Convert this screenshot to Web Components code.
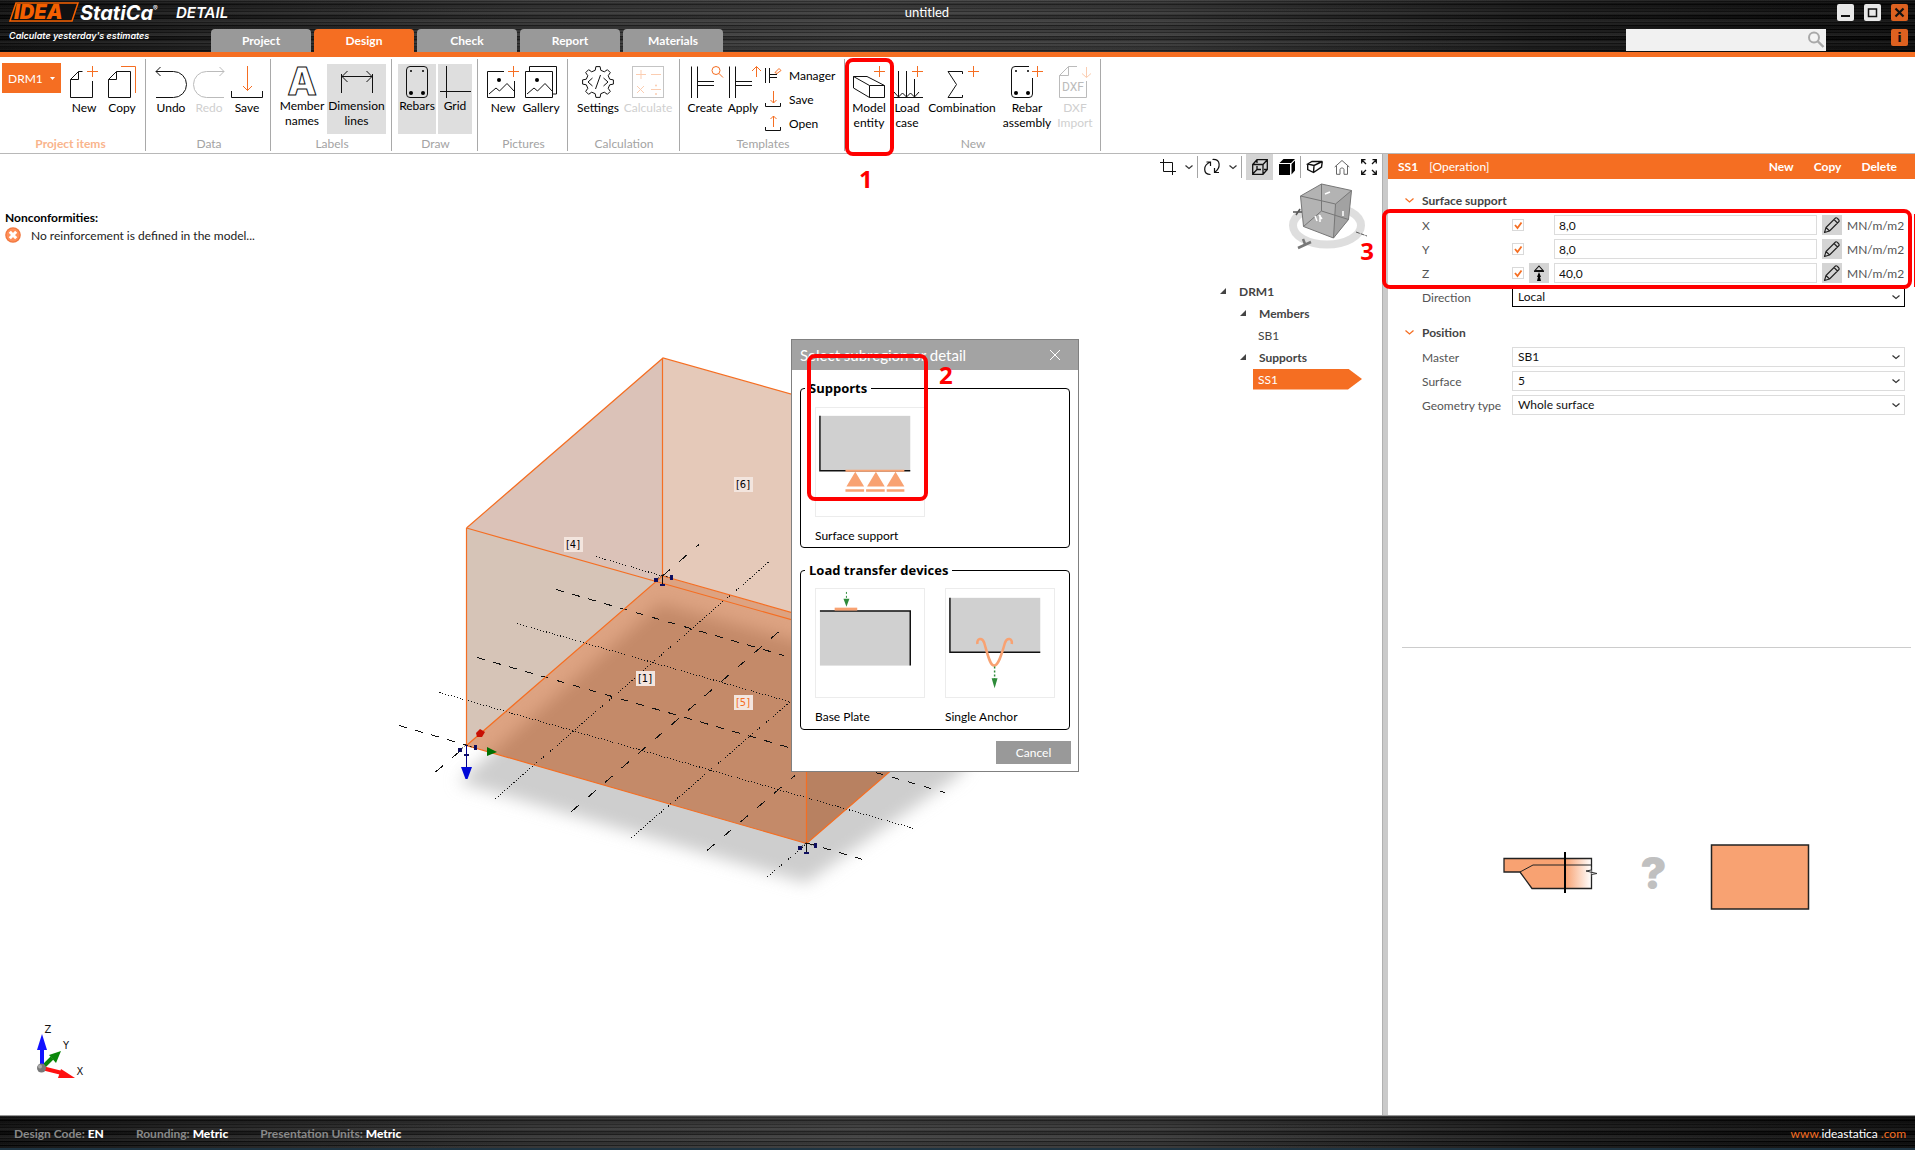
<!DOCTYPE html>
<html lang="en">
<head>
<meta charset="utf-8">
<title>untitled - IDEA StatiCa Detail</title>
<style>
html, body { height: 100%; }
body { margin: 0; background: #fff; font: 12px/15px Lato, "Open Sans", sans-serif; color: #000; --accent: #f56e22; }
</style>
</head>
<body>
<detail-app></detail-app>
<script>
const shared = `
*, *::before, *::after { box-sizing: border-box; }
button, input, select { font: inherit; color: inherit; margin: 0; border: 0; padding: 0; border-radius: 0; background: none; }
button, select { cursor: pointer; }
svg { display: block; }
`;
class Part extends HTMLElement {
  constructor() { super(); this.attachShadow({ mode: 'open' }); }
  connectedCallback() {
    if (this.shadowRoot.childNodes.length) return;
    this.shadowRoot.innerHTML = `<style>${shared}${this.css()}</style>${this.html()}`;
  }
  css() { return ':host{display:block}'; }
  html() { return '<slot></slot>'; }
}
const define = (name, cls) => customElements.define(name, cls);

/* ---------- icons ---------- */
const K = 'stroke="#111" fill="none"';
const O = 'stroke="#f56e22" fill="none"';
const plus = (x, y) => `<path ${O} d="M${x - 5.5} ${y}h11M${x} ${y - 5.5}v11"/>`;
function gear(cx, cy, ro, ri, n) {
  let d = '';
  for (let i = 0; i < n; i++) {
    [[-.30, ri], [-.17, ro], [.17, ro], [.30, ri]].forEach(([t, r]) => {
      const a = (i + t) * 2 * Math.PI / n - Math.PI / 2;
      d += (d ? 'L' : 'M') + (cx + r * Math.cos(a)).toFixed(1) + ' ' + (cy + r * Math.sin(a)).toFixed(1);
    });
  }
  return d + 'Z';
}
const beam = `<path ${K} d="M2.5 .5V32M8.5 .5V32M9 15.5H25M9 19.5H25"/>`;
const icons = {
  newdoc: [32, `<path ${K} d="M14.5 5.5H10.5L2.5 13.5V31.5H24.5V15M10.5 5.5V13.5H2.5"/>${plus(24.5, 5.5)}`],
  copy: [32, `<path ${K} d="M10.5 5.5H24.5V31.5H2.5V13.5ZV13.5H2.5"/><path ${O} d="M15 .5H29.5V27"/>`],
  undo: [32, `<path ${K} d="M1 5.5H18.5a13 13 0 0 1 0 26H1M5.5 1L1 5.5L5.5 10"/>`],
  redo: [32, `<path stroke="#bbb" fill="none" d="M31 5.5H13.5a13 13 0 0 0 0 26H31M26.5 1L31 5.5L26.5 10"/>`],
  save: [32, `<path ${K} d="M.5 25V31.5H31.5V25"/><path ${O} d="M16.5 0V24.5M12 20L16.5 24.5L21 20"/>`],
  letter: [32, `<text x="16" y="29" text-anchor="middle" font-family="Inter" font-weight="800" font-size="38" fill="none" stroke="#111">A</text>`],
  dim: [32, `<path ${K} d="M.5 8V27M31.5 8V27M1 10.5H31M6.5 5L1 10.5L6.5 16M25.5 5L31 10.5L25.5 16"/>`],
  rebars: [32, `<rect x="5.5" y=".5" width="21" height="31" rx="3.5" ${K}/><circle cx="10" cy="5" r="1"/><circle cx="22" cy="5" r="1"/><circle cx="10" cy="27" r="2"/><circle cx="22" cy="27" r="2"/>`],
  grid: [32, `<path ${K} d="M7.5 0V32M1 25.5H32"/>`],
  picnew: [32, `<path ${K} d="M17 5.5H.5V31.5H27.5V15M2 28L9 22L12.5 25L20 17.5L27.5 25.5"/><circle cx="12" cy="14" r="2"/>${plus(26.5, 5.5)}`],
  gallery: [32, `<path ${K} d="M.5 5.5H27.5V31.5H.5ZM4.5 5V.5H31.5V28H28M2 28L9 22L12.5 25L20 17.5L27.5 25.5"/><circle cx="12" cy="14" r="2"/>`],
  gear: [32, `<path ${K} stroke-linejoin="round" d="${gear(16, 16, 15.5, 12, 8)}"/><path ${K} d="M18.5 9L13.5 23M10.5 12L6 16L10.5 20M21.5 12L26 16L21.5 20"/>`],
  calc: [32, `<rect x=".5" y=".5" width="31" height="31" stroke="#c4c4c4" fill="none"/><path stroke="#fbcdb1" fill="none" d="M4 8.5H14M9 4V13M19 8.5H29M5 20L12 27M12 20L5 27M19 23.5H29"/><circle cx="24" cy="19.5" r="1" fill="#fbcdb1"/><circle cx="24" cy="28" r="1" fill="#fbcdb1"/>`],
  create: [32, `${beam}<circle cx="27" cy="4.5" r="4" ${O}/><path ${O} d="M30 7.5L34 11.5"/>`],
  apply: [32, `${beam}<path ${O} d="M29.5 11V.5M25 5L29.5 .5L34 5"/>`],
  load: [32, `<path ${K} d="M3 31.5H32M7.5 5V31M15.5 5V31M23.5 13V31M3 26L7.5 31L11.5 27L15.5 31L19.5 27L23.5 31L28 26"/>${plus(26.5, 5.5)}`],
  beam: [32, `<path ${K} d="M.5 10.5L14 10.5L31.5 19.5V31.5H16.5L.5 22ZL16.5 19.5H31.5M16.5 19.5V31.5"/>${plus(26.5, 5.5)}`],
  sigma: [32, `<path ${K} d="M16.5 8V5.5H2L10.5 18.5L2 31.5H16.5V29"/>${plus(27.5, 5.5)}`],
  rebarnew: [32, `<path ${K} d="M18 .5H4a3.5 3.5 0 0 0 -3.5 3.5V28a3.5 3.5 0 0 0 3.5 3.5H18a3.5 3.5 0 0 0 3.5 -3.5V12"/><circle cx="5" cy="5" r="1"/><circle cx="17" cy="5" r="1"/><circle cx="5" cy="27" r="2"/><circle cx="17" cy="27" r="2"/>${plus(26.5, 5.5)}`],
  dxf: [32, `<path stroke="#bbb" fill="none" d="M18 .5H9.5L.5 9.5V31.5H27.5V15M9.5 .5V9.5H.5"/><text x="14" y="25" text-anchor="middle" font-family="Roboto" font-size="12" fill="#bbb">DXF</text><path stroke="#fbcdb1" fill="none" d="M27.5 1V11.5M23 7.5L27.5 11.5L32 7.5"/>`],
  s_manager: [16, `<path ${K} d="M.5 1V16M4.5 1V16M5 7.5H12M5 10.5H12"/><path ${O} d="M10 5.5L14 1.5L16 3.5L12 6.5L10 5.5"/>`],
  s_save: [16, `<path ${K} d="M.5 12V15.5H15.5V12"/><path ${O} d="M8.5 0V12M5.5 9L8.5 12L11.5 9"/>`],
  s_open: [16, `<path ${K} d="M.5 12V15.5H15.5V12"/><path ${O} d="M8.5 12V1M5.5 4L8.5 1L11.5 4"/>`],
  crop: [16, `<path ${K} d="M3.5 0V12.5H16M0 3.5H12.5V16"/>`],
  chev: [8, `<path stroke="#333" fill="none" stroke-width="1.2" d="M.5 2.5L4 5.5L7.5 2.5"/>`],
  rotate: [16, `<path ${K} stroke-width="1.2" d="M6.5 15.5C-1 15.5 -1.5 6 6.5 3M2.5 3H6.5V7M6.500 10.500"/><path ${K} stroke-width="1.2" d="M8.5 .5C17 0 17 9 10.5 13.5M10.5 9V13.5H15"/>`],
  wire: [16, `<path ${K} stroke-width="1.3" d="M.7 5.5L5 .7H15.3V10.5L11 15.3H.7ZH11V15.3M11 5.5L15.3 .7M5 .7V4M5 7V10.5H9M12 10.5H15M.7 15L5 10.5"/>`],
  solid: [16, `<path d="M4.5 0H16L12 4H.5ZM0 5H11V16H0ZM12.5 5L16 1.5V11.5L12.5 15.5Z"/>`],
  persp: [16, `<path ${K} stroke-width="1.4" d="M.7 5L5 2.5H15.3L7 6.5ZV10.5L6.5 13.5L14.5 8L15.3 2.5M7 6.5L6.5 13.5"/>`],
  home: [16, `<path stroke="#666" fill="none" d="M.7 8L8 1.5L15.3 8M2.5 7V15.3H6V10.5C6 8.5 10 8.5 10 10.5V15.3H13.5V7"/>`],
  expand: [16, `<path ${K} stroke-width="1.3" d="M.7 4.5V.7H4.5M1 1L5 5M11.5 .7H15.3V4.5M15 1L11 5M.7 11.5V15.3H4.5M1 15L5 11M11.5 15.3H15.3V11.5M15 15L11 11"/>`],
  pencil: [20, `<path stroke="#222" fill="none" stroke-width="1.1" stroke-linejoin="round" d="M2.5 17.5L4 12.5L13.5 3C14.5 2 18 5.5 17 6.5L7.5 16ZM4 12.5L7.5 16M12 4.5L15.5 8"/>`],
  fixity: [20, `<path stroke="#111" fill="none" stroke-width="1.1" d="M10 3L14 7.5H6ZM5 8.5H15"/><path d="M10 9L12 14H11L12 18H8L9 14H8Z"/>`],
  search: [18, `<circle cx="7" cy="6.5" r="5" fill="#f4f4f4" stroke="#a9a9a9" stroke-width="2"/><path stroke="#a9a9a9" stroke-width="2.4" d="M10.5 10L16.5 16"/>`],
  close: [10, `<path stroke="#fff" fill="none" d="M0 0L10 10M10 0L0 10"/>`],
  error: [16, `<circle cx="8" cy="8" r="7.8" fill="#f07840"/><circle cx="8" cy="8" r="6.5" fill="#ff8f58"/><path stroke="#fff" stroke-width="3" d="M4.8 4.8L11.2 11.2M11.2 4.8L4.8 11.2"/>`],
};
class UiIcon extends Part {
  css() { return ':host{display:block;flex:none} svg{overflow:visible}'; }
  html() {
    const [s, body] = icons[this.getAttribute('name')];
    return `<svg width="${s}" height="${s}" viewBox="0 0 ${s} ${s}" aria-hidden="true">${body}</svg>`;
  }
}
define('ui-icon', UiIcon);

const brushed = `background:
  repeating-linear-gradient(180deg, rgba(255,255,255,.07) 0 1px, rgba(0,0,0,.22) 1px 2px, rgba(255,255,255,.03) 2px 4px, rgba(0,0,0,.25) 4px 5px, rgba(255,255,255,.05) 5px 7px),
  repeating-linear-gradient(180deg, rgba(255,255,255,.05) 0 3px, rgba(0,0,0,.12) 3px 8px, rgba(255,255,255,.04) 8px 11px),
  linear-gradient(90deg, #060606 0, #141414 10%, #2a2a2a 28%, #343434 45%, #2e2e2e 60%, #111 80%, #020202 100%);`;

/* ---------- title bar ---------- */
class TabButton extends Part {
  css() { return `:host{display:block}
    button{width:100px;height:23px;border-radius:4px 4px 0 0;background:#999;color:#fff;font-weight:700;display:block}
    :host([active]) button{background:var(--accent)}`; }
  html() { return '<button type="button"><slot></slot></button>'; }
}
define('tab-button', TabButton);

class TitleBar extends Part {
  css() { return `:host{display:flex;height:57px;border-bottom:5px solid var(--accent);color:#fff;${brushed}}
    .brand{width:211px;padding:2px 0 0 9px;flex:none}
    .brand svg{overflow:visible}
    .tag{font:italic 600 9px/12px Inter,sans-serif;margin-top:7px;white-space:nowrap}
    nav{display:flex;gap:3px;align-items:flex-end}
    .doc{position:absolute;left:0;right:0;top:4px;text-align:center;font-size:13px;line-height:17px;pointer-events:none;padding-right:61px}
    .tools{margin-left:auto;width:289px;padding:4px 7px 0 0;display:flex;flex-direction:column;gap:8px}
    .win{display:flex;justify-content:flex-end;gap:10px}
    .win button,.info{width:17px;height:17px;border-radius:2px;background:#e8e8e8;display:grid;place-items:center}
    .win button.x,.info{background:#dd6120}
    .row{display:flex;justify-content:space-between;align-items:flex-start}
    .find{display:flex;width:200px;height:22px;background:#f1f1f1;align-items:center}
    .find input{flex:1;min-width:0;height:22px;color:#222;padding:0 4px;outline:0}
    .find button{width:19px;height:19px}
    .info{font:700 13px/17px "DejaVu Sans",sans-serif;color:#111}`; }
  html() { return `
    <div class="brand">
      <svg width="200" height="21" viewBox="0 0 200 21">
        <path d="M7 1H69L63 19H1Z" fill="#111" stroke="#f56000" stroke-width="1.5"/>
        <text x="5" y="17" font-family="Inter" font-style="italic" font-weight="900" font-size="20" fill="#f56000">IDEA</text>
        <text x="71" y="18" font-family="Inter" font-style="italic" font-weight="700" font-size="20" fill="#fff">StatiCa</text>
        <text x="144" y="9" font-family="Inter" font-size="7" fill="#fff">®</text>
        <text x="167" y="16" font-family="Inter" font-style="italic" font-weight="600" font-size="15" fill="#fff">DETAIL</text>
      </svg>
      <div class="tag">Calculate yesterday's estimates</div>
    </div>
    <nav><tab-button>Project</tab-button><tab-button active>Design</tab-button><tab-button>Check</tab-button><tab-button>Report</tab-button><tab-button>Materials</tab-button></nav>
    <div class="doc">untitled</div>
    <div class="tools">
      <div class="win">
        <button type="button" aria-label="Minimize"><svg width="17" height="17"><path d="M4 12H13" stroke="#111" stroke-width="2"/></svg></button>
        <button type="button" aria-label="Maximize"><svg width="17" height="17"><path d="M4.5 5H12.5V12.5H4.5Z" fill="none" stroke="#111" stroke-width="1.5"/></svg></button>
        <button type="button" class="x" aria-label="Close"><svg width="17" height="17"><path d="M4.5 4.5L12.5 12.5M12.5 4.5L4.5 12.5" stroke="#111" stroke-width="2.2"/></svg></button>
      </div>
      <div class="row">
        <label class="find"><input type="search" aria-label="Search"><button type="button" aria-label="Find"><ui-icon name="search"></ui-icon></button></label>
        <button type="button" class="info" aria-label="Info">i</button>
      </div>
    </div>`; }
}
define('title-bar', TitleBar);

/* ---------- ribbon ---------- */
class RibbonButton extends Part {
  css() { return `:host{display:block;flex:none;width:38px}
    :host([wide]){width:50px} :host([wider]){width:72px}
    button{width:100%;display:flex;flex-direction:column;align-items:center;gap:2px;padding-top:2px;white-space:nowrap}
    button>span{margin:0 -12px;text-align:center}
    :host([toggle]) button{height:70px;gap:0}
    :host([on]) button{background:#dedede}
    :host([disabled]) span{color:#cfcfcf}`; }
  html() { return `<button type="button"${this.hasAttribute('disabled') ? ' disabled' : ''}><ui-icon name="${this.getAttribute('icon')}"></ui-icon><span><slot></slot></span></button>`; }
}
define('ribbon-button', RibbonButton);

class RibbonLine extends Part {
  css() { return `:host{display:block} button{display:flex;gap:8px;align-items:center;height:16px}`; }
  html() { return `<button type="button"><ui-icon name="${this.getAttribute('icon')}"></ui-icon><slot></slot></button>`; }
}
define('ribbon-line', RibbonLine);

class RibbonGroup extends Part {
  css() { return `:host{display:flex;flex-direction:column;justify-content:space-between;border-right:1px solid #a9a9a9;height:92px;padding-top:5px}
    .items{display:flex}
    .label{text-align:center;color:#a3a3a3;padding-right:4px}
    :host([accent]) .label{color:#f9b48c;font-weight:700}`; }
  html() { return `<div class="items"><slot></slot></div><div class="label">${this.getAttribute('label')}</div>`; }
}
define('ribbon-group', RibbonGroup);

class RibbonBar extends Part {
  css() { return `:host{display:flex;height:97px;padding-top:2px;border-bottom:1px solid #b8b8b8;background:#fff}
    .item{background:var(--accent);color:#fff;width:59px;height:30px;display:flex;align-items:center;justify-content:space-between;padding:0 6px;margin:-1px 4px 0 2px}
    .lines{display:flex;flex-direction:column;gap:8px;padding:3px 0 0 3px}
    ribbon-group{flex:none}`; }
  html() { return `
    <ribbon-group accent label="Project items" style="width:146px">
      <button type="button" class="item">DRM1 <svg width="5" height="3"><path d="M0 0H5L2.5 3Z" fill="#fff"/></svg></button>
      <ribbon-button icon="newdoc">New</ribbon-button><ribbon-button icon="copy">Copy</ribbon-button></ribbon-group>
    <ribbon-group label="Data" style="width:125px;padding-left:6px">
      <ribbon-button icon="undo">Undo</ribbon-button><ribbon-button icon="redo" disabled>Redo</ribbon-button><ribbon-button icon="save">Save</ribbon-button></ribbon-group>
    <ribbon-group label="Labels" style="width:121px;padding-left:6px">
      <ribbon-button toggle wide icon="letter">Member<br>names</ribbon-button><ribbon-button toggle on icon="dim" style="width:59px">Dimension<br>lines</ribbon-button></ribbon-group>
    <ribbon-group label="Draw" style="width:86px;padding-left:6px">
      <ribbon-button toggle on icon="rebars" style="margin-right:2px">Rebars</ribbon-button><ribbon-button toggle on icon="grid" style="width:34px">Grid</ribbon-button></ribbon-group>
    <ribbon-group label="Pictures" style="width:90px;padding-left:6px">
      <ribbon-button icon="picnew">New</ribbon-button><ribbon-button icon="gallery">Gallery</ribbon-button></ribbon-group>
    <ribbon-group label="Calculation" style="width:112px;padding-left:5px">
      <ribbon-button wide icon="gear">Settings</ribbon-button><ribbon-button wide icon="calc" disabled>Calculate</ribbon-button></ribbon-group>
    <ribbon-group label="Templates" style="width:165px;padding-left:6px">
      <ribbon-button icon="create">Create</ribbon-button><ribbon-button icon="apply">Apply</ribbon-button>
      <div class="lines"><ribbon-line icon="s_manager">Manager</ribbon-line><ribbon-line icon="s_save">Save</ribbon-line><ribbon-line icon="s_open">Open</ribbon-line></div></ribbon-group>
    <ribbon-group label="New" style="width:256px;padding-left:5px">
      <ribbon-button icon="beam">Model<br>entity</ribbon-button><ribbon-button icon="load">Load<br>case</ribbon-button>
      <ribbon-button wider icon="sigma">Combination</ribbon-button><ribbon-button wide icon="rebarnew" style="margin-left:4px">Rebar<br>assembly</ribbon-button><ribbon-button icon="dxf" disabled style="margin-left:4px">DXF<br>Import</ribbon-button></ribbon-group>`; }
}
define('ribbon-bar', RibbonBar);

/* ---------- 3D scene ---------- */
class ModelScene extends Part {
  css() { return `:host{display:block} svg{width:100%;height:100%} text{font:11px "DejaVu Sans Condensed",sans-serif}`; }
  tag(x, y, t, c = '#000') {
    return `<rect x="${x}" y="${y}" width="19" height="15" fill="#f3e5de"/><text x="${x + 9}" y="${y + 11}" text-anchor="middle" fill="${c}">[${t}]</text>`;
  }
  support(x, y) {
    return `<g stroke="#101060" fill="#080860"><path d="M${x + .5} ${y}V${y + 9}" stroke="#111"/><path d="M${x} ${y}L${x + 9} ${y + 3}M${x} ${y}L${x - 6} ${y + 5}" stroke="#111" stroke-dasharray="2 2"/><rect x="${x - 7.5}" y="${y + 3.5}" width="3" height="3"/><rect x="${x + 8.5}" y="${y + .5}" width="2" height="4"/><rect x="${x - 1.5}" y="${y + 9.5}" width="4" height="1"/></g>`;
  }
  html() { return `
  <svg viewBox="0 154 1382 961" preserveAspectRatio="xMinYMin meet" role="img" aria-label="Model">
    <defs><filter id="soft" x="-10%" y="-10%" width="120%" height="120%"><feGaussianBlur stdDeviation="8"/></filter></defs>
    <path d="M660 603L1010 700L958 776L806 883L458 782Z" fill="#cecece" filter="url(#soft)"/>
    <path d="M663 358L1004 454V673L663 576Z" fill="#e5c9b9"/>
    <path d="M466.5 528L663 358V576L466.5 745.5Z" fill="#dbc2b8"/>
    <path d="M466.5 528L657 581L466.5 745.5Z" fill="#d6c4b7"/>
    <path d="M466.5 745.5L663 576L1004 673L806.5 843.5Z" fill="rgb(186,67,0)" fill-opacity=".49"/>
    <path d="M806.5 624L1004 454V673L806.5 843.5Z" fill="#8a6040" fill-opacity=".2"/>
    <g stroke="#111" fill="none" shape-rendering="crispEdges">
      <path stroke-dasharray="8 8.6" d="M399 725.5L466 745M807 843L868 861M477 657.5L945 792.5M556 589.5L784 655.5"/>
      <path stroke-dasharray="10 12" d="M435.5 772L466.5 745.5M662.5 576L699 544.5M571.5 811.5L787 624.5M707 850.5L795 775.5"/>
      <path stroke-dasharray="1 2" d="M439.5 692.5L914 828.5M517 623.5L790 702M596 556.5L662 576M495.5 798.5L770 561M631.5 837.5L790 702M767.5 877L807 843"/>
    </g>
    <g stroke="#f56e22" fill="none" stroke-width="1.2">
      <path d="M466.5 528L663 358L1004 454M466.5 528V745.5L806.5 843.5V624L466.5 528M662.5 358V576L466.5 745.5M663 576L1004 673L806.5 843.5"/>
    </g>
    ${this.support(466, 745)}${this.support(662, 575)}${this.support(806, 843)}
    <path d="M466.5 745V768" stroke="#008"/><path d="M461 767H472L467.5 779H465.5Z" fill="#0008d8"/>
    <path d="M487 747L497 752L487 756Z" fill="#007000"/><path d="M476 733L480 729L485 732L482 737H477Z" fill="#c81004"/>
    ${this.tag(564, 537, 4)}${this.tag(734, 477, 6)}${this.tag(636, 671, 1)}${this.tag(734, 695, 5, '#f56e22')}
    <path d="M42 1068L52 1058" stroke="#0a870a" stroke-width="4"/><path d="M61 1051L56 1063L49 1055Z" fill="#0a870a"/>
    <path d="M42 1068L62 1073" stroke="#f11" stroke-width="4"/><path d="M75 1078L58 1078L61 1069Z" fill="#f11"/>
    <path d="M42 1068V1048" stroke="#11f" stroke-width="4"/><path d="M42 1034L47 1050H37Z" fill="#11f"/>
    <circle cx="41.5" cy="1068" r="4.5" fill="#777"/><circle cx="40" cy="1066.5" r="2" fill="#aaa"/>
    <g text-anchor="middle" fill="#111"><text x="48" y="1033">Z</text><text x="66" y="1049">Y</text><text x="80" y="1075">X</text></g>
  </svg>`; }
}
define('model-scene', ModelScene);

class ViewTools extends Part {
  css() { return `:host{display:flex;height:26px;align-items:center}
    button{display:grid;place-items:center;height:26px;width:27px}
    .c{width:16px} .on{background:#d4d4d4;margin-left:4px}
    i{width:1px;height:22px;background:#a5a5a5}`; }
  html() {
    const b = (n, c = '') => `<button type="button" class="${c}" aria-label="${n}"><ui-icon name="${n}"></ui-icon></button>`;
    return b('crop') + b('chev', 'c') + '<i></i>' + b('rotate') + b('chev', 'c') + '<i></i>' + b('wire', 'on') + b('solid') + '<i></i>' + b('persp') + b('home') + b('expand'); }
}
define('view-tools', ViewTools);

class NavCube extends Part {
  html() { return `<svg width="90" height="76" viewBox="1284 180 90 76" role="img" aria-label="View cube">
    <ellipse cx="1327" cy="225.5" rx="34" ry="19" fill="none" stroke="#dedede" stroke-width="8"/>
    <path d="M1300.5 196L1321.5 184L1351.5 190.5L1348.5 219.5L1333.5 238L1303.5 226.5Z" fill="#b3b3b3"/>
    <path d="M1335.5 204L1351.5 190.5L1348.5 219.5L1333.5 238Z" fill="#a2a2a2"/>
    <path d="M1300.5 196L1321.5 184L1351.5 190.5L1335.5 204ZL1303.5 226.5L1333.5 238L1348.5 219.5L1351.5 190.5M1335.5 204L1333.5 238M1321.5 184V211L1303.5 226.5M1321.5 211L1348.5 219.5" fill="none" stroke="#777"/>
    <path d="M1315 216L1317 221M1320 215V222M1319 215L1322 219M1325 194L1330 192M1343 211V216" stroke="#fff" stroke-width="1.5"/>
    <path d="M1293 212L1302 212M1296 215L1300 209" stroke="#555" stroke-width="1.5"/>
    <path d="M1356 232L1367 236" stroke="#555" stroke-dasharray="4 1"/>
    <path d="M1298 248L1311 242M1303 239L1305 244" stroke="#777" stroke-width="2.5"/></svg>`; }
}
define('nav-cube', NavCube);

class TreeItem extends Part {
  css() { return `:host{display:flex;height:22px;align-items:center;color:#444;gap:13px}
    :host([branch]){font-weight:700}
    :host([depth="1"]){padding-left:20px}
    :host([depth="2"]){padding-left:33px}
    span{padding-left:5px}
    :host([branch]) span{padding-left:0}
    :host([selected]) span{background:var(--accent);color:#fff;width:109px;height:21px;line-height:21px;clip-path:polygon(0 0,95px 0,100% 50%,95px 100%,0 100%)}`; }
  html() { return (this.hasAttribute('branch') ? '<svg width="6" height="6"><path d="M6 0V6H0Z" fill="#444"/></svg>' : '') + '<span><slot></slot></span>'; }
}
define('tree-item', TreeItem);

class ModelViewport extends Part {
  css() { return `:host{display:grid;min-width:0;overflow:hidden}
    model-scene,.over{grid-area:1/1;min-width:0;min-height:0}
    .over{display:flex;justify-content:space-between;z-index:1}
    .issues{padding:56px 0 0 5px} .issues b{display:block}
    .issue{display:flex;gap:10px;align-items:center;height:20px;color:#222}
    .side{width:236px}
    view-tools{justify-content:flex-end}
    nav-cube{margin:0 0 24px 138px}
    .tree{padding-left:74px}`; }
  html() { return `<model-scene></model-scene>
    <div class="over">
      <div class="issues"><b>Nonconformities:</b><div class="issue"><ui-icon name="error"></ui-icon>No reinforcement is defined in the model...</div></div>
      <div class="side"><view-tools></view-tools><nav-cube></nav-cube>
        <div class="tree"><tree-item branch>DRM1</tree-item><tree-item branch depth="1">Members</tree-item><tree-item depth="2">SB1</tree-item><tree-item branch depth="1">Supports</tree-item><tree-item depth="2" selected>SS1</tree-item></div>
      </div>
    </div>`; }
}
define('model-viewport', ModelViewport);

/* ---------- properties ---------- */
class StiffnessRow extends Part {
  css() { return `:host{display:grid;grid-template-columns:85px 12px 20px 1fr 20px 58px;align-items:center;height:24px;column-gap:5px;color:#555;padding:0 10px 0 34px}
    .tick{display:grid} .tick>*{grid-area:1/1}
    .tick input{appearance:none;width:12px;height:12px;border:1px solid #d9d9d9;background:#fff}
    .tick svg{pointer-events:none}
    .val{width:100%;height:20px;border:1px solid #dcdcdc;padding:0 4px;color:#111}
    button{width:20px;height:20px;background:#d4d4d4}`; }
  html() {
    const n = this.getAttribute('axis');
    return `<label for="v">${n}</label><span class="tick"><input type="checkbox" checked aria-label="${n} stiffness"><svg width="12" height="12"><path d="M3 6L5.5 9L9.5 3.5" fill="none" stroke="#f56e22" stroke-width="1.8"/></svg></span>
    ${this.hasAttribute('fixity') ? '<button type="button" aria-label="Fixity"><ui-icon name="fixity"></ui-icon></button>' : '<span></span>'}
    <input class="val" id="v" type="text" value="${this.getAttribute('value')}"><button type="button" aria-label="Edit ${n}"><ui-icon name="pencil"></ui-icon></button><span>MN/m/m2</span>`; }
}
define('stiffness-row', StiffnessRow);

class ChoiceRow extends Part {
  css() { return `:host{display:grid;grid-template-columns:85px 1fr;align-items:center;height:24px;column-gap:5px;color:#555;padding:0 10px 0 34px}
    label{white-space:nowrap}
    .pick{display:grid;align-items:center} .pick>*{grid-area:1/1}
    select{appearance:none;width:100%;height:20px;border:1px solid #dcdcdc;padding:0 5px;color:#111;background:#fff;line-height:16px}
    :host([focus]) select{border-color:#000}
    ui-icon{justify-self:end;margin-right:5px;pointer-events:none}`; }
  html() { return `<label for="s">${this.getAttribute('label')}</label><span class="pick"><select id="s"><option>${this.getAttribute('value')}</option></select><ui-icon name="chev"></ui-icon></span>`; }
}
define('choice-row', ChoiceRow);

class SectionHead extends Part {
  css() { return `:host{display:flex;align-items:center;gap:8px;height:25px;padding-left:17px;color:#444;font-weight:700} svg{flex:none}`; }
  html() { return `<svg width="9" height="5"><path d="M.5 .5L4.5 4L8.5 .5" fill="none" stroke="#f56e22" stroke-width="1.3"/></svg><slot></slot>`; }
}
define('section-head', SectionHead);

class PropertyPanel extends Part {
  css() { return `:host{display:grid;grid-template-rows:25px 1fr 1fr;background:#fff;min-width:0}
    header{display:flex;align-items:center;background:var(--accent);color:#fff;padding:0 18px 0 10px}
    header span{margin-left:11px;flex:1}
    header button{font-weight:700;margin-left:20px}
    .fields{padding-top:9px;display:flex;flex-direction:column;gap:11px}
    .preview{border-top:1px solid #ccc;margin:0 4px 0 14px;padding-bottom:10px;display:flex;justify-content:center;align-items:center}
    .preview svg{max-width:100%}`; }
  html() { return `<header><b>SS1</b><span>[Operation]</span><button type="button">New</button><button type="button">Copy</button><button type="button">Delete</button></header>
    <div class="fields">
      <div><section-head>Surface support</section-head>
      <stiffness-row axis="X" value="8,0"></stiffness-row><stiffness-row axis="Y" value="8,0"></stiffness-row><stiffness-row axis="Z" value="40,0" fixity></stiffness-row>
      <choice-row focus label="Direction" value="Local"></choice-row></div>
      <div><section-head>Position</section-head>
      <choice-row label="Master" value="SB1"></choice-row><choice-row label="Surface" value="5"></choice-row><choice-row label="Geometry type" value="Whole surface"></choice-row></div>
    </div>
    <div class="preview"><svg width="308" height="68" viewBox="1502 843 308 68" role="img" aria-label="Surface preview">
      <defs><linearGradient id="fade"><stop offset="0" stop-color="#f8a272"/><stop offset=".7" stop-color="#f8a272"/><stop offset="1" stop-color="#fff"/></linearGradient></defs>
      <path d="M1503 858.5H1590.5V888.5H1531L1519 872H1503Z" fill="url(#fade)" stroke="#222" stroke-width="1.3"/>
      <path d="M1519 872L1532 865H1590.5" fill="none" stroke="#222"/><path d="M1590.5 867V870L1585 871L1596 873.5L1590.5 874.5V877" fill="#fff" stroke="#333"/>
      <path d="M1564 852V893" stroke="#000" stroke-width="2"/>
      <text x="1652.5" y="889" text-anchor="middle" font-family="Inter" font-weight="900" font-size="44" fill="#c0c0c0">?</text>
      <rect x="1710.5" y="845" width="97" height="64" fill="#f8a272" stroke="#222" stroke-width="1.5"/>
    </svg></div>`; }
}
define('property-panel', PropertyPanel);

/* ---------- dialog ---------- */
const tiles = {
  support: `<rect x="4" y="8" width="92" height="56" fill="#d0d0d0"/><path d="M4 8V64H96" fill="none" stroke="#111" stroke-width="1.5"/><path d="M30 64H90" stroke="#f8a272" stroke-width="2"/><path d="M40 65L49 80H31ZM61 65L70 80H52ZM81 65L90 80H72Z" fill="#f8a272"/><path d="M30 84H49M51 84H70M72 84H90" stroke="#f8a272" stroke-width="2.5"/>`,
  plate: `<rect x="4" y="22" width="92" height="56" fill="#d0d0d0"/><path d="M4 22.5H96V78" fill="none" stroke="#111" stroke-width="1.5"/><path d="M19 20.5H42" stroke="#f8a272" stroke-width="3"/><path d="M31 3V12" stroke="#2e8b3a" stroke-dasharray="2 2"/><path d="M28 10H34L31 18Z" fill="#2e8b3a"/>`,
  anchor: `<rect x="4" y="9" width="92" height="56" fill="#d0d0d0"/><path d="M4 9V64.5H96" fill="none" stroke="#111" stroke-width="1.5"/><path d="M32 56C31 50 37 49 39 55C43 69 45 78 49 78C53 78 56 69 60 55C62 49 68 50 67 56" fill="none" stroke="#f8a272" stroke-width="2.6"/><path d="M49.5 79V94" stroke="#2e8b3a" stroke-width="1.5" stroke-dasharray="2 2"/><path d="M46.5 91H52.5L49.5 101Z" fill="#2e8b3a"/>`,
};
class DetailTile extends Part {
  css() { return `:host{display:block} button{display:block;text-align:left;width:110px} svg{border:1px solid #ececec;margin-bottom:11px}`; }
  html() { return `<button type="button"><svg width="110" height="110" viewBox="0 0 110 110">${tiles[this.getAttribute('kind')]}</svg><slot></slot></button>`; }
}
define('detail-tile', DetailTile);

class DetailDialog extends Part {
  css() { return `:host{display:block;width:288px;background:#fff;border:1px solid #808080}
    header{height:30px;background:#a3a3a3;color:#fff;display:flex;align-items:center;justify-content:space-between;padding:0 16px 0 8px;font-size:15px}
    .close{width:12px;height:12px}
    fieldset{border:1px solid #000;border-radius:4px;margin:0 8px;padding:11px 14px 4px;height:168px;display:block}
    legend{font:700 13px/16px "Open Sans",sans-serif;padding:0 4px;margin-left:-10px}
    .tiles{display:flex;gap:20px}
    .a{margin-top:10px} .b{margin-top:14px;padding-top:10px}
    footer{display:flex;justify-content:flex-end;padding:11px 7px 7px}
    footer button{width:75px;height:23px;background:#999;color:#fff}`; }
  html() { return `<header>Select subregion or detail<button type="button" class="close" aria-label="Close"><ui-icon name="close"></ui-icon></button></header>
    <fieldset class="a"><legend>Supports</legend><div class="tiles"><detail-tile kind="support">Surface support</detail-tile></div></fieldset>
    <fieldset class="b"><legend>Load transfer devices</legend><div class="tiles"><detail-tile kind="plate">Base Plate</detail-tile><detail-tile kind="anchor">Single Anchor</detail-tile></div></fieldset>
    <footer><button type="button">Cancel</button></footer>`; }
}
define('detail-dialog', DetailDialog);

/* ---------- status bar ---------- */
class StatusBar extends Part {
  css() { return `:host{display:flex;height:35px;padding:2px 9px 0 14px;gap:32px;align-items:center;border-bottom:2px solid #1e3442;color:#888;font-weight:700;border-top:1px solid #999;${brushed}}
    b{color:#fff} a{margin-left:auto;color:var(--accent);text-decoration:none;font-weight:400} a span{color:#fff}`; }
  html() { return `<span>Design Code: <b>EN</b></span><span>Rounding: <b>Metric</b></span><span>Presentation Units: <b>Metric</b></span><a href="#">www.<span>ideastatica</span> .com</a>`; }
}
define('status-bar', StatusBar);

/* ---------- step marks drawn over the window ---------- */
class StepMark extends Part {
  css() { return `:host{position:absolute;display:block;color:#f00;pointer-events:none;font:700 24px/26px "Open Sans",sans-serif}
    :host([frame]){box-sizing:border-box;border:4px solid #f00;border-radius:8px}`; }
}
define('step-mark', StepMark);

class DetailApp extends Part {
  css() { return `:host{display:flex;flex-direction:column;height:100%;position:relative;margin-right:5px;overflow:hidden}
    title-bar{position:relative}
    main{flex:1;min-height:0;display:grid;grid-template-columns:1fr 6px 527px}
    .split{background:#cacaca;border-left:1px solid #b0b0b0}
    detail-dialog{position:absolute;left:791px;top:339px}`; }
  html() { return `<title-bar></title-bar><ribbon-bar></ribbon-bar>
    <main><model-viewport></model-viewport><div class="split"></div><property-panel></property-panel></main>
    <status-bar></status-bar>
    <detail-dialog></detail-dialog>
    <step-mark frame style="left:845px;top:58px;width:49px;height:98px"></step-mark>
    <step-mark style="left:859px;top:166px">1</step-mark>
    <step-mark frame style="left:807px;top:354px;width:121px;height:147px"></step-mark>
    <step-mark style="left:939px;top:362px">2</step-mark>
    <step-mark frame style="right:3px;top:209px;width:530px;height:80px"></step-mark>
    <step-mark style="right:541px;top:238px">3</step-mark>
    <step-mark style="right:0;top:214px;width:1px;height:73px;background:#f00"></step-mark>`; }
}
define('detail-app', DetailApp);
</script>
</body>
</html>
